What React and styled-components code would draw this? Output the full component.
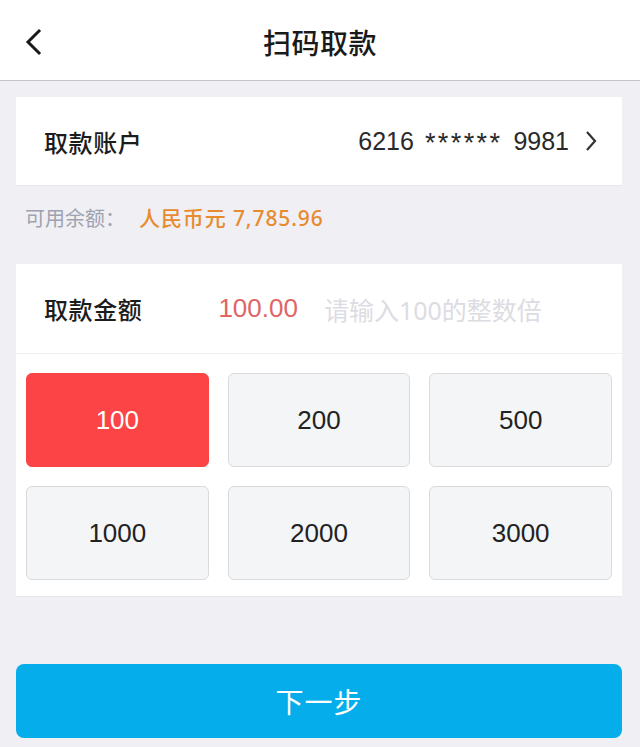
import React, { useState } from "react";
import styled, { createGlobalStyle } from "styled-components";

const GlobalStyle = createGlobalStyle`
  html, body {
    margin: 0;
    padding: 0;
    background: #efeff4;
    font-family: "Noto Sans", "Noto Sans CJK SC", sans-serif;
  }
  * { box-sizing: border-box; }
`;

const amounts = [100, 200, 500, 1000, 2000, 3000];

const App = () => {
  const [selected, setSelected] = useState(100);

  return (
    <>
      <GlobalStyle />
      <Page>
        <Header>
          <BackButton aria-label="back">
            <svg width="18" height="28" viewBox="0 0 18 28">
              <path
                d="M15 3 L4 14 L15 25"
                fill="none"
                stroke="#1a1a1a"
                strokeWidth="3"
                strokeLinecap="square"
              />
            </svg>
          </BackButton>
          <Title>扫码取款</Title>
        </Header>

        <Body>
          <Card>
            <AccountRow>
              <Label>取款账户</Label>
              <AccountValue>
                <span>6216</span>
                <Mask>******</Mask>
                <span>9981</span>
                <svg width="14" height="24" viewBox="0 0 14 24">
                  <path
                    d="M3 3 L11 12 L3 21"
                    fill="none"
                    stroke="#333"
                    strokeWidth="2.2"
                  />
                </svg>
              </AccountValue>
            </AccountRow>
          </Card>

          <Balance>
            <span>可用余额：</span>
            <strong>人民币元 7,785.96</strong>
          </Balance>

          <Card>
            <AmountRow>
              <Label>取款金额</Label>
              <AmountValue>{selected}.00</AmountValue>
              <Placeholder>请输入100的整数倍</Placeholder>
            </AmountRow>
            <Grid>
              {amounts.map((a) => (
                <Chip
                  key={a}
                  $active={a === selected}
                  onClick={() => setSelected(a)}
                >
                  {a}
                </Chip>
              ))}
            </Grid>
          </Card>

          <NextButton>下一步</NextButton>
        </Body>
      </Page>
    </>
  );
};

const Page = styled.div`
  width: 640px;
  height: 747px;
  background: #efeff4;
  overflow: hidden;
`;

const Header = styled.div`
  height: 81px;
  background: #fff;
  border-bottom: 1px solid #c4c4c6;
  display: flex;
  align-items: center;
  justify-content: center;
  position: relative;
`;

const BackButton = styled.button`
  position: absolute;
  left: 24px;
  top: 28px;
  border: none;
  background: none;
  padding: 0;
  display: flex;
`;

const Title = styled.h1`
  margin: 0;
  font-size: 28px;
  font-weight: 500;
  color: #1a1a1a;
  letter-spacing: 0.5px;
  padding-top: 4px;
`;

const Body = styled.div`
  padding: 16px 18px 0 16px;
  display: flex;
  flex-direction: column;
`;

const Card = styled.div`
  background: #fff;
  border-bottom: 1px solid #e8e8ec;
`;

const AccountRow = styled.div`
  height: 88px;
  display: flex;
  align-items: center;
  justify-content: space-between;
  padding: 0 24px 0 28px;
`;

const Label = styled.span`
  font-size: 24px;
  font-weight: 500;
  color: #1c1c1c;
  letter-spacing: 0.6px;
`;

const AccountValue = styled.span`
  display: flex;
  align-items: center;
  gap: 11px;
  font-size: 25px;
  color: #2a2a2a;
  font-family: "Liberation Sans", sans-serif;
  svg {
    margin-left: 4px;
  }
`;

const Mask = styled.span`
  font-size: 27px;
  letter-spacing: 2.4px;
  position: relative;
  top: 2px;
`;

const Balance = styled.div`
  height: 78px;
  display: flex;
  align-items: center;
  padding: 0 0 16px 9px;
  font-size: 20px;
  span {
    color: #9ea3b0;
    margin-right: 14px;
  }
  strong {
    color: #e88a2e;
    font-weight: 500;
    font-size: 21px;
    letter-spacing: 0.9px;
  }
`;

const AmountRow = styled.div`
  height: 90px;
  display: flex;
  align-items: center;
  padding: 0 28px;
  border-bottom: 1px solid #f0f0f3;
`;

const AmountValue = styled.span`
  margin-left: 76px;
  font-size: 26px;
  color: #e06565;
  font-family: "Liberation Sans", sans-serif;
`;

const Placeholder = styled.span`
  margin-left: 26px;
  font-size: 25px;
  color: #dcdce2;
`;

const Grid = styled.div`
  display: grid;
  grid-template-columns: repeat(3, 1fr);
  column-gap: 19px;
  row-gap: 19px;
  padding: 19px 10px 16px 10px;
`;

const Chip = styled.button`
  height: 94px;
  border-radius: 6px;
  border: 1px solid ${(p) => (p.$active ? "#fb4446" : "#d9dadd")};
  background: ${(p) => (p.$active ? "#fc4446" : "#f4f5f7")};
  color: ${(p) => (p.$active ? "#fff" : "#222")};
  font-size: 26px;
  font-family: "Liberation Sans", sans-serif;
  cursor: pointer;
`;

const NextButton = styled.button`
  margin-top: 67px;
  height: 74px;
  border: none;
  border-radius: 8px;
  background: #05aeea;
  color: #fff;
  font-size: 28px;
  font-family: "Noto Sans CJK SC", sans-serif;
  letter-spacing: 1px;
`;

export default App;
